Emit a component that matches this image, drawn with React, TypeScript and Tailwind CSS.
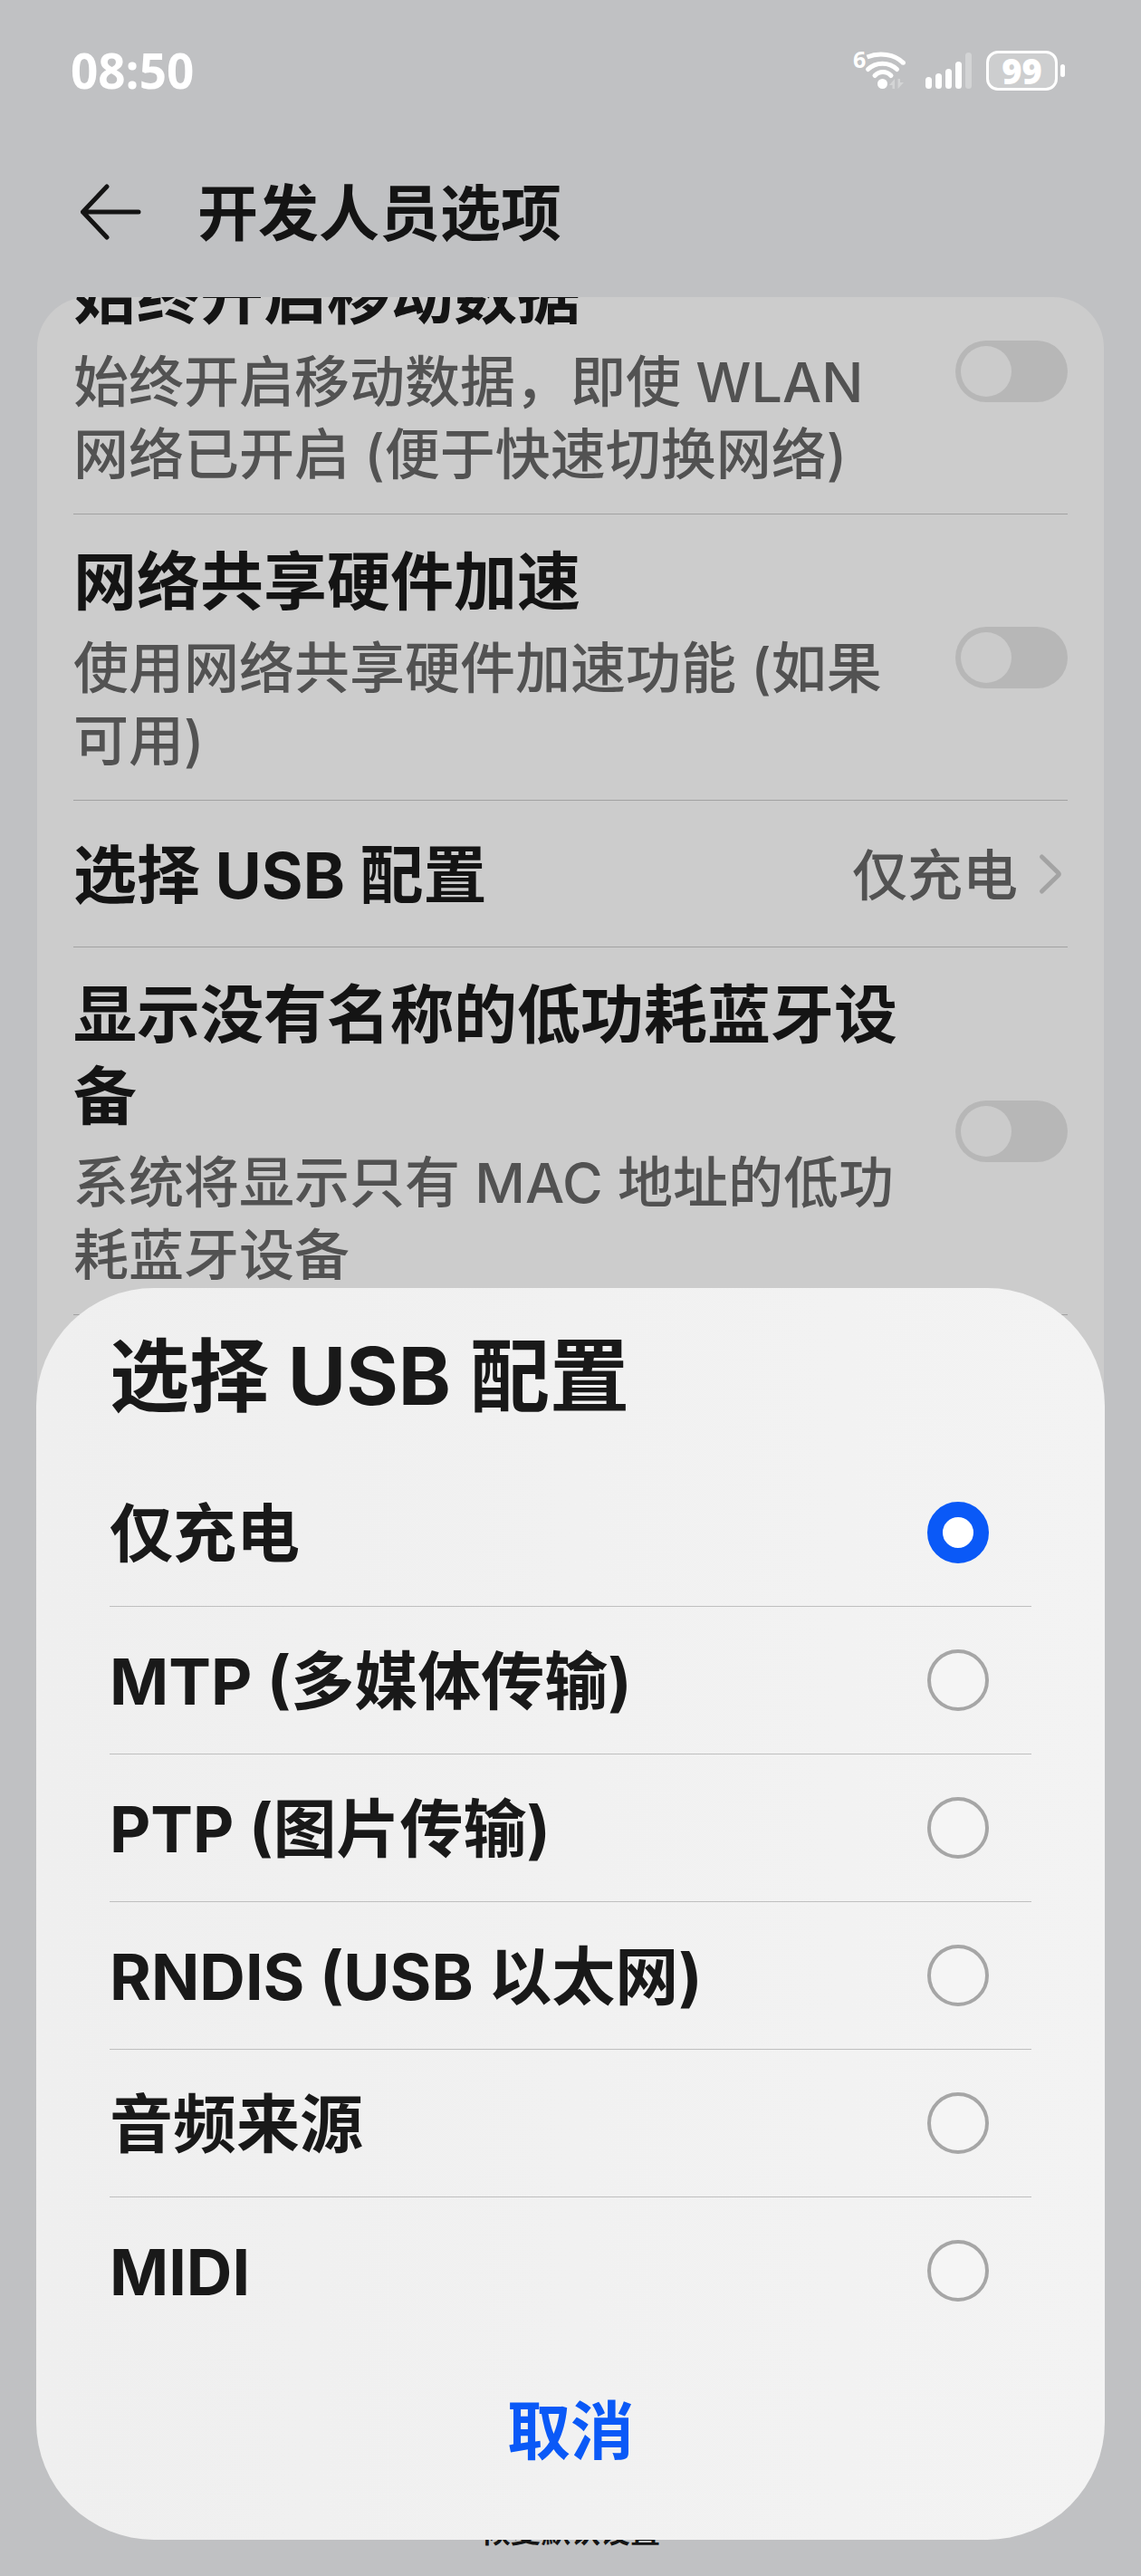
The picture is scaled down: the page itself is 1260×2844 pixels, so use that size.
import React, { useState } from 'react'

const switchItems = {
  mobileData: {
    id: 'mobile-data',
    title: '始终开启移动数据',
    text: '始终开启移动数据，即使 WLAN 网络已开启 (便于快速切换网络)',
  },
  tethering: {
    id: 'tethering',
    title: '网络共享硬件加速',
    text: '使用网络共享硬件加速功能 (如果可用)',
  },
  bluetooth: {
    id: 'bluetooth',
    title: '显示没有名称的低功耗蓝牙设备',
    text: '系统将显示只有 MAC 地址的低功耗蓝牙设备',
  },
}

const usbOptions = [
  { value: 'charge', label: '仅充电' },
  { value: 'mtp', label: 'MTP (多媒体传输)' },
  { value: 'ptp', label: 'PTP (图片传输)' },
  { value: 'rndis', label: 'RNDIS (USB 以太网)' },
  { value: 'audio', label: '音频来源' },
  { value: 'midi', label: 'MIDI' },
]

function WifiIcon() {
  return (
    <svg
      className="w-[60px] h-[44px] overflow-visible"
      viewBox="0 0 60 44"
      fill="none"
      stroke="#fff"
      strokeWidth="5"
      strokeLinecap="round"
      aria-hidden="true"
    >
      <path d="M15.500 7C29 1.500 46 3.500 55.500 13.500" strokeLinecap="butt" />
      <path d="M55.300 13.300h.1" />
      <path d="M16.500 20.500C25 12 40 12 48.500 20.500" />
      <path d="M24 27.500C29 22 37 22 42 27.500" />
      <circle cx="32.500" cy="36.500" r="5.500" fill="#fff" stroke="none" />
      <path
        d="M46 31v11h-2.500v-4H40zM49.500 31v11l6.500-7h-4v-4z"
        fill="#d3d4d5"
        stroke="none"
      />
      <text
        x="0"
        y="19"
        fill="#fff"
        stroke="none"
        fontSize="25"
        fontWeight="700"
        fontFamily="Open Sans, sans-serif"
      >
        6
      </text>
    </svg>
  )
}

function SignalIcon() {
  return (
    <svg className="w-[52px] h-[44px]" viewBox="0 0 52 44" aria-hidden="true">
      <g fill="#fff">
        <rect x="0" y="29" width="7" height="13" rx="3.500" />
        <rect x="11" y="25" width="7" height="17" rx="3.500" />
        <rect x="22" y="20" width="7" height="22" rx="3.500" />
        <rect x="33" y="12" width="7" height="30" rx="3.500" />
      </g>
      <rect x="44" y="2" width="7" height="40" rx="3.500" fill="#d3d4d5" />
    </svg>
  )
}

function StatusBar() {
  return (
    <div className="flex items-center justify-between h-[156px] pl-[78px] pr-[84px] text-white">
      <time className="text-[53px] leading-[60px] font-bold font-['Open_Sans',sans-serif]">
        08:50
      </time>
      <div className="flex items-center">
        <WifiIcon />
        <div className="w-5" />
        <SignalIcon />
        <div className="flex items-center ml-[15px] gap-[3px]">
          <span className="flex items-center justify-center w-[79px] h-[44px] border-[3px] border-white rounded-[13px] bg-[#cdcecf] text-[38px] leading-[36px] font-extrabold font-['Open_Sans',sans-serif]">
            99
          </span>
          <span className="w-[5px] h-[14px] bg-white rounded-full" />
        </div>
      </div>
    </div>
  )
}

function SwitchRow({ item }) {
  return (
    <li className="flex items-center justify-between gap-12 pt-[26px] pb-[25px] border-b border-[#a2a2a2]">
      <label htmlFor={item.id} className="flex-1 pt-1">
        <span className="block text-[70px] leading-[90px] font-bold text-[#141414]">
          {item.title}
        </span>
        <span className="block mt-[10px] text-[61px] leading-[80px] font-medium text-[#525252]">
          {item.text}
        </span>
      </label>
      <input
        id={item.id}
        type="checkbox"
        role="switch"
        className="appearance-none shrink-0 flex items-center w-[124px] h-[68px] px-[6px] rounded-full bg-[#b7b7b7] before:block before:size-14 before:rounded-full before:bg-[#cbcbcb] checked:justify-end checked:bg-[#0a59f7]"
      />
    </li>
  )
}

function UsbDialog() {
  const [selected, setSelected] = useState('charge')

  return (
    <section
      role="dialog"
      aria-modal="true"
      aria-labelledby="usb-title"
      className="absolute inset-x-10 bottom-10 px-[81px] pt-[42px] pb-[27px] rounded-[130px] bg-linear-to-r from-[#efefef] to-[#f3f3f3] text-[#191919]"
    >
      <h2 id="usb-title" className="mb-[37px] text-[88px] leading-[110px] font-bold">
        选择 USB 配置
      </h2>
      <fieldset aria-labelledby="usb-title">
        {usbOptions.map((option) => (
          <label
            key={option.value}
            className="flex items-center justify-between h-[163px] pr-[47px] border-b border-[#bfbfbf] last:border-transparent text-[70px] leading-[90px] font-bold"
          >
            <span className="pt-1">{option.label}</span>
            <input
              type="radio"
              name="usb"
              value={option.value}
              checked={selected === option.value}
              onChange={() => setSelected(option.value)}
              className="appearance-none shrink-0 size-[68px] rounded-full border-[4px] border-[#a6a6a6] bg-[#f5f5f5] checked:border-[17px] checked:border-[#0a59f7] checked:bg-white"
            />
          </label>
        ))}
      </fieldset>
      <button
        type="button"
        className="block w-full pt-[51px] pb-[47px] text-[70px] leading-[90px] font-bold text-[#0a59f7]"
      >
        取消
      </button>
    </section>
  )
}

export default function App() {
  return (
    <div
      lang="zh-CN"
      className="relative flex flex-col h-screen overflow-hidden bg-[#c0c1c3] font-['Inter','Noto_Sans_CJK_SC',sans-serif]"
    >
      <StatusBar />
      <header className="flex items-center h-[156px] mb-4 pl-[87px]">
        <button type="button" aria-label="返回">
          <svg
            className="w-[70px] h-[66px]"
            viewBox="0 0 70 66"
            fill="none"
            stroke="#141414"
            strokeWidth="5"
            strokeLinecap="round"
            strokeLinejoin="round"
            aria-hidden="true"
          >
            <path d="M31 5L4.500 33 31 61M4.500 33H66" />
          </svg>
        </button>
        <h1 className="ml-[61px] pt-1 text-[67px] leading-[90px] font-bold text-[#141414]">
          开发人员选项
        </h1>
      </header>

      <main className="flex-1 min-h-0 mx-[41px] overflow-hidden">
        <div className="flow-root min-h-full px-10 rounded-t-[56px] bg-[#cccccc]">
          {/* list is scrolled part way through its first row */}
          <ul className="-mt-[76px]">
            <SwitchRow item={switchItems.mobileData} />
            <SwitchRow item={switchItems.tethering} />
            <li className="border-b border-[#a2a2a2]">
              <button
                type="button"
                className="flex items-center w-full pt-[34px] pb-[33px] text-left"
              >
                <span className="flex-1 pt-1 text-[70px] leading-[90px] font-bold text-[#141414]">
                  选择 USB 配置
                </span>
                <span className="pt-1 text-[61px] leading-[80px] font-medium text-[#525252]">
                  仅充电
                </span>
                <svg
                  className="w-[28px] h-[48px] ml-[22px] mr-[5px]"
                  viewBox="0 0 28 48"
                  fill="none"
                  stroke="#a3a3a3"
                  strokeWidth="5"
                  strokeLinecap="round"
                  strokeLinejoin="round"
                  aria-hidden="true"
                >
                  <path d="M4.500 5L22.500 22.500Q24 24 22.500 25.500L4.500 43" />
                </svg>
              </button>
            </li>
            <SwitchRow item={switchItems.bluetooth} />
          </ul>
        </div>
      </main>

      <footer className="pt-[140px] pb-[29px] text-center">
        <button
          type="button"
          className="text-[33px] leading-[40px] font-bold text-[#141414]"
        >
          恢复默认设置
        </button>
      </footer>

      <UsbDialog />
    </div>
  )
}
